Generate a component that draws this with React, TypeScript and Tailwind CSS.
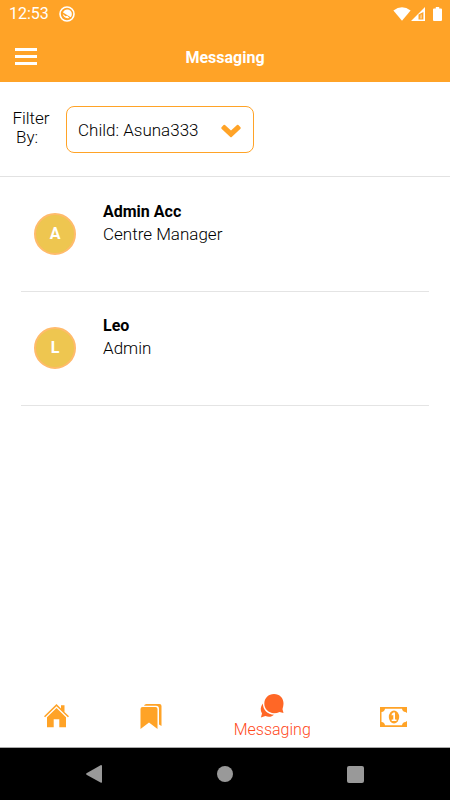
import { useState } from 'react';

const contacts = [
  { name: 'Admin Acc', role: 'Centre Manager' },
  { name: 'Leo', role: 'Admin' },
];

function StatusBar() {
  return (
    <div className="flex h-7 items-center pr-2 pl-[9px] text-white">
      <span className="text-base leading-5">12:53</span>
      <svg viewBox="0 0 16 16" className="ml-2.5 h-4 w-4" fill="none">
        <circle cx="8" cy="8" r="7" stroke="currentColor" strokeWidth="1.6" />
        <path d="M4 6.500C5 3.500 9 2.600 11.500 4.800C13.300 6.500 13.200 9.500 11.700 11.300Z" fill="currentColor" />
        <path d="M3.800 8Q4.200 11.400 8.500 12.300L10.400 12L8.300 9.800L6.500 10.200Z" fill="currentColor" />
      </svg>
      <div className="ml-auto flex items-center">
        <svg viewBox="0 0 18 14" className="h-[14px] w-[18px]" fill="currentColor">
          <path d="M.4 3.600Q9-3.200 17.600 3.600L9 13.800Z" />
        </svg>
        <svg viewBox="0 0 14 14" className="h-[14px] w-[14px]">
          <path fill="currentColor" fillRule="evenodd" d="M14 0V14H0ZM12.400 5L7.500 7.500V12.400H12.400Z" />
          <path fill="currentColor" d="M9.500 7.500h1.500v4H8.800z" opacity=".4" />
        </svg>
        <svg viewBox="0 0 9 14" className="ml-2 h-[14px] w-[9px]" fill="currentColor">
          <path d="M2.800 0h3.400v1.500H8a1 1 0 0 1 1 1V13a1 1 0 0 1-1 1H1a1 1 0 0 1-1-1V2.500a1 1 0 0 1 1-1h1.800Z" />
        </svg>
      </div>
    </div>
  );
}

function Header() {
  return (
    <header className="bg-[#ffa327]">
      <StatusBar />
      <div className="grid h-[54px] grid-cols-[1fr_auto_1fr] items-center px-[15px] pt-1.5 text-white">
        <button type="button" aria-label="Open menu" className="flex w-[22px] flex-col gap-1 pb-1">
          <span className="h-[3px] w-full bg-white" />
          <span className="h-[3px] w-full bg-white" />
          <span className="h-[3px] w-full bg-white" />
        </button>
        <h1 className="text-base leading-5 font-bold">Messaging</h1>
      </div>
    </header>
  );
}

function FilterBar() {
  const [child, setChild] = useState('Asuna333');

  return (
    <div className="flex items-center border-b border-[#e2e2e2] px-3 pt-6 pb-[23px]">
      <label htmlFor="child" className="w-[38px] pb-1 text-center text-[17px] leading-[19px] font-light">
        <span className="block">Filter</span>
        <span className="block pr-2">By:</span>
      </label>
      <div className="relative ml-4 w-[188px]">
        <select
          id="child"
          value={child}
          onChange={(e) => setChild(e.target.value)}
          className="h-[47px] w-full appearance-none rounded-lg border border-[#ffa327] bg-white pt-0.5 pl-[11px] text-[17px] font-light"
        >
          <option value="Asuna333">Child: Asuna333</option>
        </select>
        <svg
          viewBox="0 0 20 14"
          className="pointer-events-none absolute top-[18px] right-[13px] h-[14px] w-5"
          fill="#ffa327"
        >
          <path d="M.5 3.300L2.600 1Q3.300.4 4 1L10 6.600L16 1Q16.700.4 17.400 1L19.500 3.300Q20 4 19.500 4.700L10.700 13Q10 13.600 9.300 13L.5 4.700Q0 4 .5 3.300Z" />
        </svg>
      </div>
    </div>
  );
}

function ContactList() {
  return (
    <ul className="flex-1 px-[21px] pt-px">
      {contacts.map((contact) => (
        <li key={contact.name} className="border-b border-[#e4e4e4]">
          <button type="button" className="flex h-[113px] w-full items-center pb-px pl-[13px] text-left">
            <span className="flex h-[42px] w-[42px] items-center justify-center rounded-full border-2 border-[#ffbb6b] bg-[#eec650] text-base font-bold text-white">
              {contact.name[0]}
            </span>
            <span className="ml-[27px] pb-[22px] leading-[22px]">
              <span className="block text-base leading-[22px] font-bold">{contact.name}</span>
              <span className="block text-[17px] leading-[22px] font-light">{contact.role}</span>
            </span>
          </button>
        </li>
      ))}
    </ul>
  );
}

function TabBar() {
  return (
    <nav className="grid h-[62px] grid-cols-4 text-[#ffa327]">
      <button type="button" aria-label="Home" className="flex items-center justify-center">
        <svg viewBox="0 0 25 24" className="h-6 w-[25px]" fill="currentColor">
          <path d="M0 12.300L12.500 0L17 4.400V1.200H20.500V7.900L25 12.300L23.900 13.300L12.500 2.200L1.100 13.300Z" />
          <path d="M12.500 4L22 13.200V23.300H15.300V15.300H9.700V23.300H3V13.200Z" />
        </svg>
      </button>
      <button type="button" aria-label="Bookmarks" className="flex items-center justify-center pr-9">
        <svg viewBox="0 0 22 25" className="h-[25px] w-[22px]" fill="currentColor">
          <path d="M2.500 3H15.500Q17.500 3 17.500 5V25L9 18.600L.5 25V5Q.5 3 2.500 3Z" />
          <path d="M4 1.800Q4.500 0 6.500 0H19.500Q21.500 0 21.500 2V22L19 20.400V5Q19 1.800 16 1.800Z" />
        </svg>
      </button>
      <button
        type="button"
        aria-current="page"
        className="flex flex-col items-center justify-center gap-0.5 pt-0.5 pr-[18px] text-base leading-5 font-light text-[#ff4a1c]"
      >
        <svg viewBox="0 0 24 24" className="h-6 w-6" fill="#ff6726">
          <path d="M14 0C19.700 0 23.500 4.100 23.500 9.300C23.500 12 22.800 13.800 22.500 15.200L23.500 19L19.600 18C17.900 18.800 16 19.200 14 19.200C8.500 19.200 4.300 15 4.300 9.600C4.300 4.200 8.400 0 14 0Z" />
          <path d="M2.900 9.500C2.900 16 7.500 20.500 14 20.700C12 22.800 8.500 23.300 5.400 22L.9 23.400L2 19.400C.1 16.400.3 12.500 2.900 9.500Z" />
        </svg>
        Messaging
      </button>
      <button type="button" aria-label="Payments" className="flex items-center justify-center pt-0.5">
        <svg viewBox="0 0 27 20" className="h-5 w-[27px]" fill="currentColor">
          <path
            fillRule="evenodd"
            d="M0 0H27V6L25.500 5Q22.300 4.700 22 1.800H5Q4.700 4.700 1.500 5V15Q4.700 15.300 5 18.200H22Q22.300 15.300 25.500 15L27 14V20H0Z"
          />
          <ellipse cx="14" cy="10" rx="5.200" ry="6.500" />
          <path d="M13.300 5.500H15V12.500H16.500V14H11.700V12.500H13.300V8L11.700 8.600V7Z" fill="white" />
        </svg>
      </button>
    </nav>
  );
}

function SystemNav() {
  return (
    <div className="grid h-[53px] grid-cols-[1fr_auto_1fr] items-center border-t border-[#aaa] bg-black px-[86px] text-[#999]">
      <button type="button" aria-label="Back" className="justify-self-start">
        <svg viewBox="0 0 16 18" className="h-[18px] w-4" fill="currentColor">
          <path d="M15 0Q16 0 16 1V17Q16 18 15 17.700L.5 9.700Q-.2 9 .5 8.300Z" />
        </svg>
      </button>
      <button type="button" aria-label="Home screen" className="h-4 w-4 rounded-full bg-[#999]" />
      <button type="button" aria-label="Recent apps" className="h-[17px] w-[17px] justify-self-end rounded-xs bg-[#999]" />
    </div>
  );
}

export default function App() {
  return (
    <div className="flex min-h-screen flex-col bg-white font-['Roboto',sans-serif] text-black">
      <Header />
      <FilterBar />
      <ContactList />
      <TabBar />
      <SystemNav />
    </div>
  );
}
